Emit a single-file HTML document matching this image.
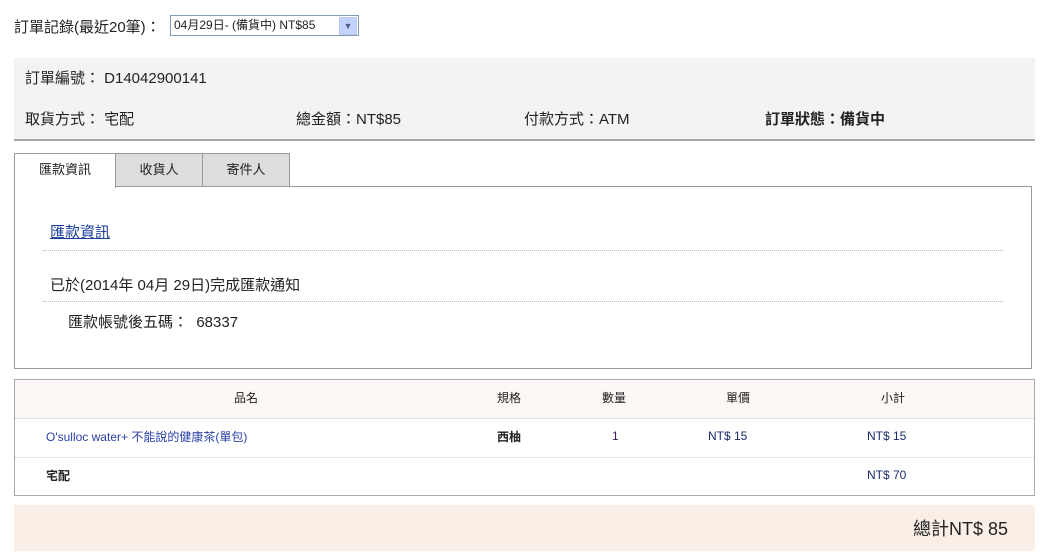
<!DOCTYPE html>
<html><head><meta charset="utf-8"><style>
body{margin:0;width:1046px;height:559px;background:#fff;font-family:"Liberation Sans","Noto Sans CJK TC",sans-serif;color:#222;position:relative;overflow:hidden}
.a{position:absolute;white-space:nowrap}
</style></head><body>
<div class="a" style="left:14px;top:16px;font-size:15px">訂單記錄(最近20筆)：</div>
<div class="a" style="left:170px;top:15px;width:187px;height:19px;border:1px solid #7f9db9;background:#fff;font-size:12px;line-height:19px">
 <span style="padding-left:3px">04月29日- (備貨中) NT$85</span>
 <div class="a" style="right:1px;top:1px;width:16px;height:16px;background:#c3d3fd;border:1px solid #b9c9ef;color:#4d6185;font-size:9px;text-align:center;line-height:16px">▼</div>
</div>
<div class="a" style="left:14px;top:58px;width:1021px;height:81px;background:#f3f3f3;border-bottom:2px solid #a8a8a8"></div>
<div class="a" style="left:25px;top:67px;font-size:15px">訂單編號： D14042900141</div>
<div class="a" style="left:25px;top:108px;font-size:15px">取貨方式： 宅配</div>
<div class="a" style="left:296px;top:108px;font-size:15px">總金額：NT$85</div>
<div class="a" style="left:524px;top:108px;font-size:15px">付款方式：ATM</div>
<div class="a" style="left:765px;top:108px;font-size:15px;font-weight:bold">訂單狀態：備貨中</div>

<div class="a" style="left:14px;top:186px;width:1016px;height:181px;border:1px solid #999"></div>
<div class="a" style="left:14px;top:153px;width:100px;height:34px;border:1px solid #999;border-bottom:none;background:#fff;font-size:13px;text-align:center;line-height:32px">匯款資訊</div>
<div class="a" style="left:115px;top:153px;width:86px;height:32px;border:1px solid #999;background:#ddd;font-size:13px;text-align:center;line-height:32px">收貨人</div>
<div class="a" style="left:202px;top:153px;width:86px;height:32px;border:1px solid #999;background:#ddd;font-size:13px;text-align:center;line-height:32px">寄件人</div>
<div class="a" style="left:50px;top:221px;font-size:15px;color:#1a3d9a;text-decoration:underline">匯款資訊</div>
<div class="a" style="left:43px;top:250px;width:960px;border-top:1px dotted #bbb"></div>
<div class="a" style="left:50px;top:274px;font-size:15px">已於(2014年 04月 29日)完成匯款通知</div>
<div class="a" style="left:43px;top:301px;width:960px;border-top:1px dotted #bbb"></div>
<div class="a" style="left:68px;top:311px;font-size:15px">匯款帳號後五碼：&nbsp; 68337</div>

<div class="a" style="left:14px;top:379px;width:1019px;height:115px;border:1px solid #aaa"></div>
<div class="a" style="left:15px;top:380px;width:1019px;height:38px;background:#fdf8f5;border-bottom:1px dotted #ccc"></div>
<div class="a" style="left:15px;top:457px;width:1019px;border-top:1px dotted #ccc"></div>
<div class="a" style="left:234px;top:389px;font-size:12px">品名</div>
<div class="a" style="left:497px;top:389px;font-size:12px">規格</div>
<div class="a" style="left:602px;top:389px;font-size:12px">數量</div>
<div class="a" style="left:726px;top:389px;font-size:12px">單價</div>
<div class="a" style="left:881px;top:389px;font-size:12px">小計</div>
<div class="a" style="left:46px;top:428px;font-size:12px;color:#2a3fa8">O'sulloc water+ 不能說的健康茶(單包)</div>
<div class="a" style="left:497px;top:428px;font-size:12px;font-weight:bold">西柚</div>
<div class="a" style="left:612px;top:429px;font-size:12px;color:#402060">1</div>
<div class="a" style="left:708px;top:429px;font-size:12px;color:#1a2a6a">NT$ 15</div>
<div class="a" style="left:867px;top:429px;font-size:12px;color:#1a2a6a">NT$ 15</div>
<div class="a" style="left:46px;top:467px;font-size:12px;font-weight:bold">宅配</div>
<div class="a" style="left:867px;top:468px;font-size:12px;color:#1a2a6a">NT$ 70</div>

<div class="a" style="left:14px;top:505px;width:1021px;height:46px;background:#f9efe6"></div>
<div class="a" style="left:913px;top:515px;font-size:18px">總計NT$ 85</div>
</body></html>
